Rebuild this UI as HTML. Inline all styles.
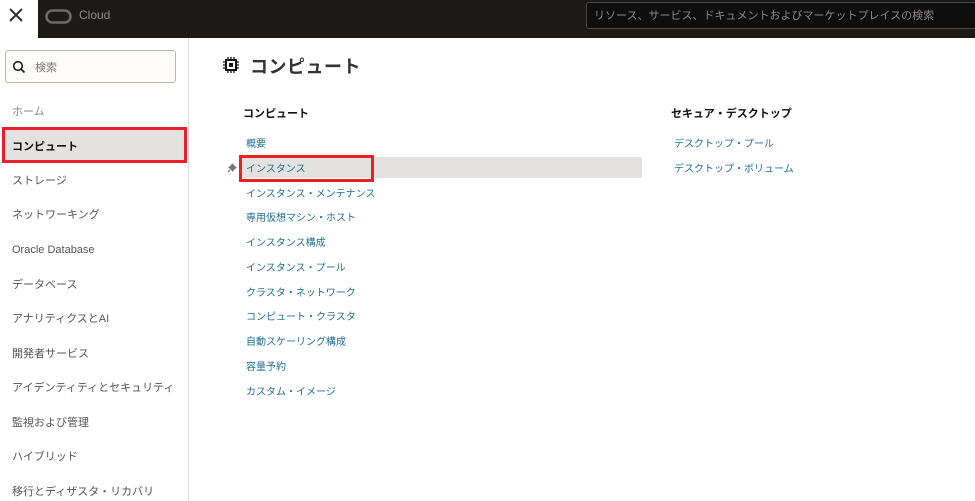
<!DOCTYPE html>
<html><head><meta charset="utf-8"><style>
*{margin:0;padding:0;box-sizing:border-box}
body{width:975px;height:501px;overflow:hidden;background:#fff;font-family:"Liberation Sans","Noto Sans CJK JP",sans-serif;position:relative}
.top{position:absolute;left:0;top:0;width:975px;height:38px;background:#1b1a19}
.xbox{position:absolute;left:0;top:0;width:38px;height:38px;background:#fff}
.abs{position:absolute;white-space:nowrap}
.side{position:absolute;left:0;top:38px;width:189px;height:463px;border-right:1px solid #ddd;background:#fff}
.mi{position:absolute;left:12px;font-size:11px;color:#555;line-height:14px;white-space:nowrap}
.lk{position:absolute;left:246px;font-size:10px;color:#1e6e94;line-height:12px;white-space:nowrap}
.lk2{position:absolute;left:674px;font-size:10px;color:#1e6e94;line-height:12px;white-space:nowrap}
</style></head><body>
<div class="top"></div>
<div class="xbox"><svg width="38" height="38"><path d="M10 9L22 21M22 9L10 21" stroke="#333" stroke-width="2" fill="none"/></svg></div>
<svg class="abs" style="left:45px;top:8px" width="30" height="16"><rect x="1.5" y="2.5" width="24" height="12" rx="6" stroke="#6d6b69" stroke-width="2.5" fill="none"/></svg>
<div class="abs" style="left:79px;top:8px;font-size:12px;color:#8d8b89">Cloud</div>
<div class="abs" style="left:586px;top:2px;width:400px;height:27px;border:1px solid #4a4846;border-radius:3px;background:#0f0e0e"></div>
<div class="abs" style="left:594px;top:9px;font-size:11px;color:#8a8886;line-height:14px">リソース、サービス、ドキュメントおよびマーケットプレイスの検索</div>
<div class="side"></div>
<div class="abs" style="left:5px;top:50px;width:171px;height:33px;border:1px solid #bbb6b0;border-radius:3px;background:#fdfcfb"></div>
<svg class="abs" style="left:12px;top:60px" width="14" height="14"><circle cx="6" cy="6" r="4.3" stroke="#222" stroke-width="1.6" fill="none"/><path d="M9 9L12.5 12.5" stroke="#222" stroke-width="1.8"/></svg>
<div class="abs" style="left:35px;top:61px;font-size:11px;color:#777;line-height:14px">検索</div>
<div class="abs" style="left:2px;top:127px;width:185px;height:36px;background:#e3e2e0;border:3px solid #e8202a"></div>
<div class="mi" style="top:105px;color:#888">ホーム</div>
<div class="mi" style="top:140px;color:#111;font-weight:bold">コンピュート</div>
<div class="mi" style="top:174px">ストレージ</div>
<div class="mi" style="top:208px">ネットワーキング</div>
<div class="mi" style="top:243px">Oracle Database</div>
<div class="mi" style="top:278px">データベース</div>
<div class="mi" style="top:312px">アナリティクスとAI</div>
<div class="mi" style="top:347px">開発者サービス</div>
<div class="mi" style="top:381px">アイデンティティとセキュリティ</div>
<div class="mi" style="top:416px">監視および管理</div>
<div class="mi" style="top:450px">ハイブリッド</div>
<div class="mi" style="top:485px">移行とディザスタ・リカバリ</div>
<svg class="abs" style="left:223px;top:57px" width="16" height="16"><rect x="3" y="3" width="10" height="10" stroke="#111" stroke-width="2" fill="none"/><rect x="6" y="6" width="4" height="4" fill="#111"/><path d="M5 0V3M8 0V3M11 0V3M5 13V16M8 13V16M11 13V16M0 5H3M0 8H3M0 11H3M13 5H16M13 8H16M13 11H16" stroke="#111" stroke-width="1.3"/></svg>
<div class="abs" style="left:250px;top:55px;font-size:18px;line-height:24px;color:#333;font-weight:bold;letter-spacing:0.5px">コンピュート</div>
<div class="abs" style="left:243px;top:107px;font-size:11px;line-height:14px;font-weight:bold;color:#111">コンピュート</div>
<div class="abs" style="left:671px;top:107px;font-size:11px;line-height:14px;font-weight:bold;color:#111">セキュア・デスクトップ</div>
<div class="abs" style="left:240px;top:157px;width:402px;height:21px;background:#e3e2e0;border-radius:2px"></div>
<div class="abs" style="left:239px;top:155px;width:135px;height:27px;border:3px solid #e8202a"></div>
<svg class="abs" style="left:227px;top:162px" width="11" height="11"><path d="M5 1L10 6L8.5 6.5L6.5 8.5L6 10L1 5L2.5 4.5L4.5 2.5Z" fill="#777"/><path d="M3 8L1 10" stroke="#777" stroke-width="1.3"/></svg>
<div class="lk" style="top:139px">概要</div>
<div class="lk" style="top:164px">インスタンス</div>
<div class="lk" style="top:189px">インスタンス・メンテナンス</div>
<div class="lk" style="top:213px">専用仮想マシン・ホスト</div>
<div class="lk" style="top:238px">インスタンス構成</div>
<div class="lk" style="top:263px">インスタンス・プール</div>
<div class="lk" style="top:288px">クラスタ・ネットワーク</div>
<div class="lk" style="top:312px">コンピュート・クラスタ</div>
<div class="lk" style="top:337px">自動スケーリング構成</div>
<div class="lk" style="top:362px">容量予約</div>
<div class="lk" style="top:387px">カスタム・イメージ</div>
<div class="lk2" style="top:139px">デスクトップ・プール</div>
<div class="lk2" style="top:164px">デスクトップ・ボリューム</div>
</body></html>
